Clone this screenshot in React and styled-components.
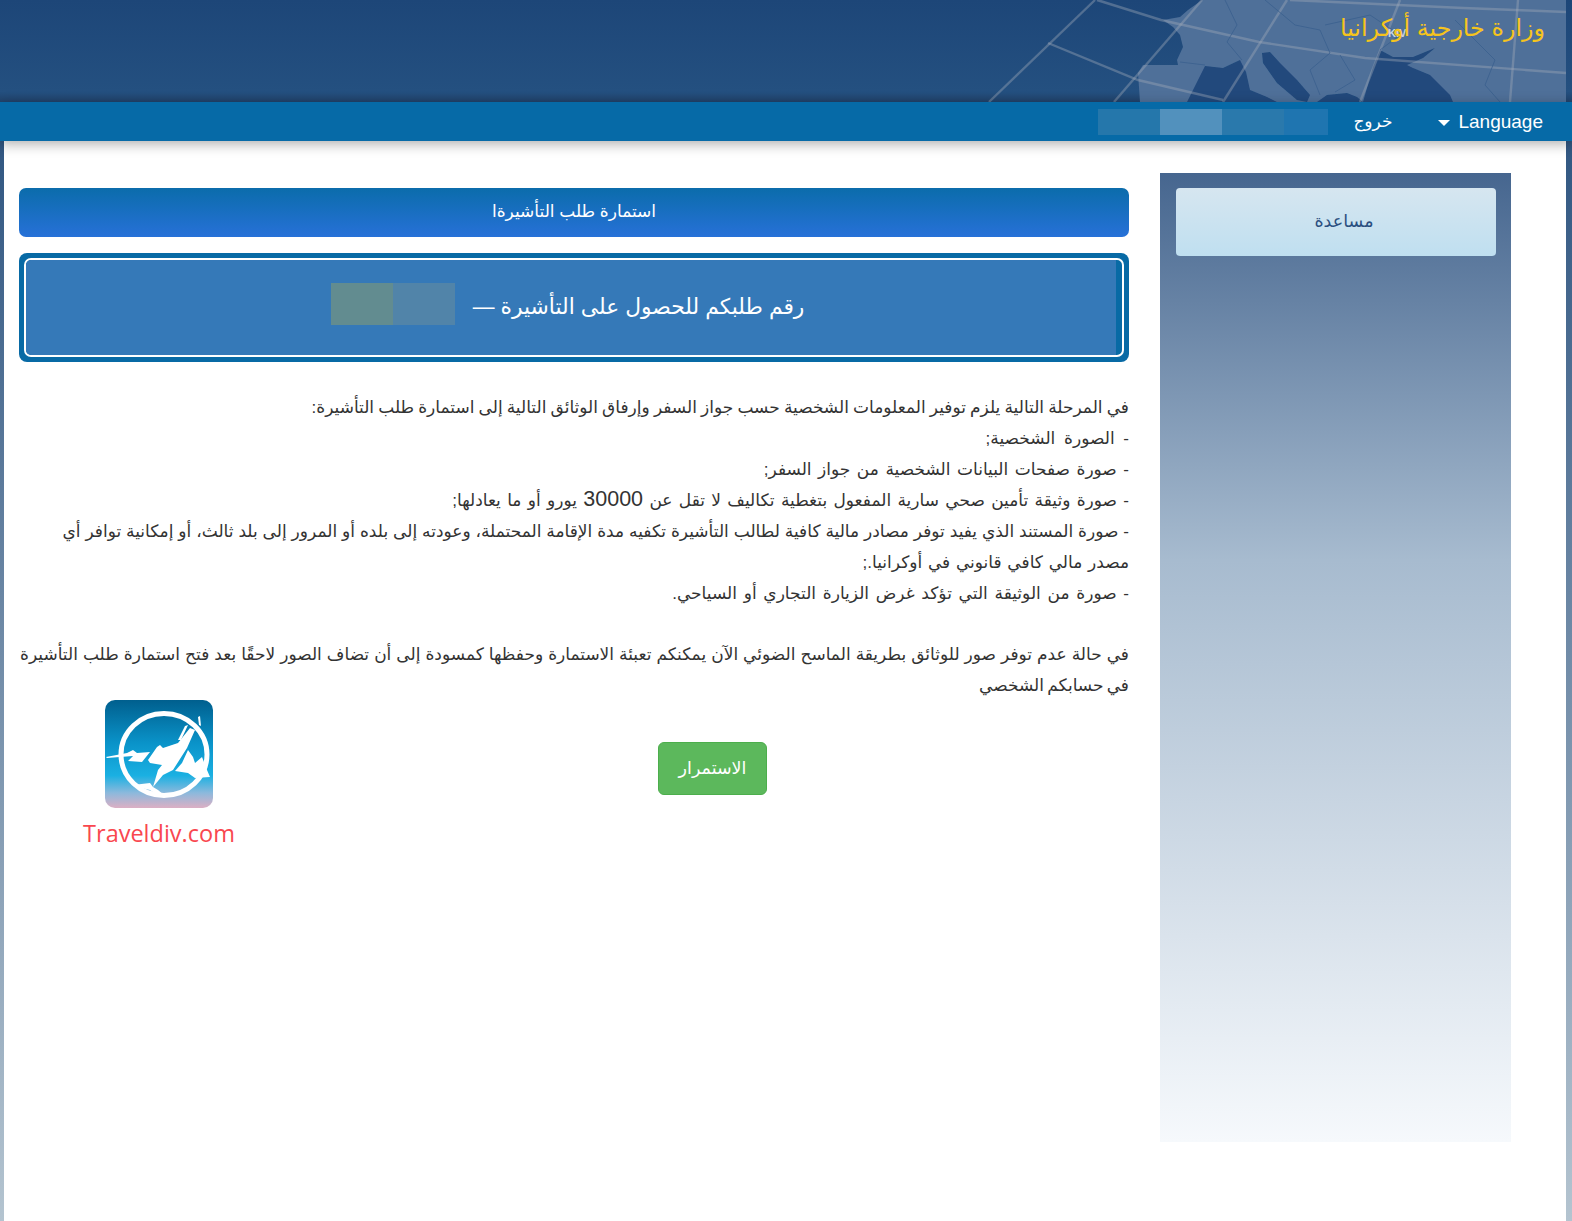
import React from "react";
import styled, { createGlobalStyle } from "styled-components";

const GlobalStyle = createGlobalStyle`
    html, body {
        margin: 0;
        padding: 0;
        background: #fff;
    }
    body {
        font-family: "Liberation Sans", "DejaVu Sans", Arial, sans-serif;
        color: #333;
    }
`;

const Page = styled.div`
    width: 1572px;
    min-height: 1221px;
    display: flex;
    flex-direction: column;
    background: linear-gradient(#1f4877 0%, #5d7b9c 40%, #b4c4d0 100%);
`;

const Header = styled.header`
    position: relative;
    height: 102px;
    overflow: hidden;
    display: flex;
    justify-content: flex-end;
    background: linear-gradient(#1d4678 0%, #245080 90%, #21436c 100%);
`;

const MapArt = styled.svg`
    position: absolute;
    top: 0;
    right: 0;
    width: 592px;
    height: 102px;
`;

const MinistryName = styled.h1`
    position: relative;
    margin: 13px 27px 0 0;
    font-size: 23.8px;
    line-height: 29px;
    font-weight: normal;
    color: #f6c41c;
    direction: rtl;
`;

const NavBar = styled.nav`
    position: relative;
    z-index: 2;
    height: 39px;
    display: flex;
    justify-content: flex-end;
    align-items: center;
    padding-right: 29px;
    background: #066aa7;
    box-shadow: 0 3px 12px rgba(0, 0, 0, 0.32);
    color: #fff;
`;

const NavBlur = styled.div`
    display: flex;
    width: 230px;
    height: 26px;
    margin-top: 1px;
    margin-right: 25px;
`;

const Pixel = styled.span`
    width: ${(p) => p.$w}px;
    background: ${(p) => p.$c};
`;

const NavLink = styled.a`
    font-size: 17px;
    margin-right: 46px;
    direction: rtl;
`;

const LanguageMenu = styled.a`
    display: flex;
    align-items: center;
    gap: 8px;
    font-size: 19px;
`;

const Caret = styled.span`
    width: 0;
    height: 0;
    margin-top: 3px;
    border-left: 6px solid transparent;
    border-right: 6px solid transparent;
    border-top: 6px solid #fff;
`;

const Body = styled.div`
    flex: 1;
    display: flex;
    align-items: flex-start;
    gap: 31px;
    margin: 0 6px 0 4px;
    padding: 0 55px 0 15px;
    background: #fff;
`;

const Main = styled.main`
    width: 1110px;
    padding-top: 47px;
`;

const TitleBar = styled.div`
    height: 49px;
    box-sizing: border-box;
    padding-bottom: 2px;
    display: flex;
    justify-content: center;
    align-items: center;
    border-radius: 7px;
    background: linear-gradient(#0b6cab, #2771d8);
    color: #fff;
    font-size: 17px;
    direction: rtl;
`;

const NumberFrame = styled.div`
    margin-top: 16px;
    height: 109px;
    box-sizing: border-box;
    padding: 5px;
    border-radius: 8px;
    background: #086aa5;
`;

const NumberInner = styled.div`
    height: 100%;
    box-sizing: border-box;
    border: 2px solid #fff;
    border-radius: 7px;
    overflow: hidden;
`;

const NumberPanel = styled.div`
    height: 100%;
    box-sizing: border-box;
    display: flex;
    justify-content: center;
    align-items: center;
    gap: 18px;
    direction: rtl;
    margin-right: 6px;
    padding: 0 7px 2px 0;
    background: #3579b8;
    color: #fff;
    font-size: 21.8px;
`;

const NumberBlur = styled.div`
    display: flex;
    width: 124px;
    height: 42px;
    margin-top: -6px;
`;

const Copy = styled.div`
    margin-top: 30px;
    direction: rtl;
    font-size: 17px;
`;

const Line = styled.div`
    height: 31px;
    line-height: 31px;
    white-space: nowrap;
    word-spacing: ${(p) => p.$spread || 0}px;
    text-align: right;
`;

const Gap = styled.div`
    height: 30px;
`;

const Amount = styled.span`
    font-size: 21.5px;
    line-height: 0;
`;

const ActionRow = styled.div`
    display: flex;
    align-items: flex-start;
    margin-top: -1px;
    padding-left: 65px;
    gap: 424px;
`;

const Brand = styled.div`
    width: 150px;
    display: flex;
    flex-direction: column;
    align-items: center;
`;

const LogoArt = styled.svg`
    width: 108px;
    height: 108px;
`;

const BrandName = styled.div`
    margin-top: 9px;
    font-family: "Open Sans", sans-serif;
    font-size: 23.5px;
    line-height: 32px;
    color: #f9474f;
`;

const ContinueButton = styled.button`
    width: 109px;
    height: 53px;
    margin-top: 42px;
    border: 1px solid #4cae4c;
    border-radius: 6px;
    background: #5cb85c;
    color: #fff;
    font: inherit;
    font-size: 17.5px;
    direction: rtl;
`;

const Sidebar = styled.aside`
    width: 351px;
    height: 969px;
    margin-top: 32px;
    box-sizing: border-box;
    padding: 15px 15px 0 16px;
    background: linear-gradient(#46668f 0%, #a7bbcf 40%, #f6f9fc 100%);
`;

const HelpCard = styled.a`
    height: 68px;
    box-sizing: border-box;
    padding: 0 0 2px 16px;
    display: flex;
    justify-content: center;
    align-items: center;
    border-radius: 4px;
    background: linear-gradient(#d6e6f0, #bfdff0);
    color: #2b4f80;
    font-size: 17.5px;
    direction: rtl;
`;

const navPixels = [
    [62, "#2577ab"],
    [62, "#5291bd"],
    [62, "#2a79ac"],
    [44, "#1f75b0"],
];

const numberPixels = [
    [62, "#5184a9"],
    [62, "#628c90"],
];

const Map = () => (
    <MapArt viewBox="-150 0 592 102">
        <defs>
            <filter id="soft">
                <feGaussianBlur stdDeviation="0.6" />
            </filter>
        </defs>
        <path
            fill="#4f7099"
            d="M72 0 L58 10 L50 17 L33 20 L43 27 L50 35 L53 47 L47 60 L48 65 L13 65 L8 73 L10 102 L436 102 L436 0 Z"
        />
        <g fill="#20497c" filter="url(#soft)">
            <path d="M57 102 L68 80 L75 66 L93 68 L110 60 L116 72 L120 90 L137 97 L147 102 Z" />
            <path d="M132 53 L140 52 L150 63 L167 80 L180 95 L177 102 L167 100 L147 83 L133 63 Z" />
            <path d="M187 102 L197 95 L217 93 L227 97 L233 102 Z" />
            <path d="M250 50 L263 57 L283 57 L305 48 L293 58 L277 65 L283 68 L300 75 L320 95 L323 102 L233 102 L243 67 Z" />
        </g>
        <g fill="none" stroke="#a0aab8" strokeOpacity="0.4" strokeWidth="2.4" filter="url(#soft)">
            <path d="M-33 0 L31 20 L129 42 L235 58 L436 73" />
            <path d="M160 0 L333 8 L436 12" />
            <path d="M-35 0 L-141 102" />
            <path d="M72 0 L-16 102" />
            <path d="M157 0 L93 102" />
            <path d="M270 0 L230 102" />
            <path d="M388 0 L380 102" />
            <path d="M-82 43 L8 80 L93 100" />
        </g>
        <g fill="none" stroke="#3a5f8e" strokeWidth="0.8">
            <path d="M95 0 L107 25 L97 42 L112 60" />
            <path d="M135 0 L165 25 L190 30 L200 53 L180 70 L190 95" />
            <path d="M195 25 L240 15 L270 35 L250 50" />
            <path d="M325 20 L345 40 L365 60 L355 85 L370 102" />
            <path d="M50 62 L75 65" />
            <path d="M210 55 L225 80 L205 92" />
        </g>
        <text x="258" y="37" fontSize="11" fontWeight="bold" fill="#c9d4e2" fontFamily="Liberation Sans, sans-serif">
            KIV
        </text>
    </MapArt>
);

const Logo = () => (
    <LogoArt viewBox="0 0 108 108">
        <defs>
            <linearGradient id="logoSky" x1="0" y1="0" x2="0" y2="1">
                <stop offset="0" stopColor="#005f8e" />
                <stop offset="0.4" stopColor="#0a93c9" />
                <stop offset="0.7" stopColor="#1ab0e2" />
                <stop offset="0.86" stopColor="#8cb9dc" />
                <stop offset="1" stopColor="#dcafc4" />
            </linearGradient>
        </defs>
        <rect width="108" height="108" rx="10" fill="url(#logoSky)" />
        <ellipse cx="59" cy="54.5" rx="43" ry="41" fill="none" stroke="#fff" strokeWidth="5" />
        <g fill="#fff">
            <path d="M1 57 L22 53 L28 50 L32 53 L45 52 L37 62 L23 61 L28 56 L2 58 Z" />
            <path d="M43 60 L52 47 L55 45 L58 48 L73 43 L85 28 L90 30 L82 48 L68 70 L58 75 L48 87 L53 70 L57 65 L45 63 Z" />
            <path d="M70 71 L77 63 L83 50 L88 57 L90 63 L97 57 L102 70 L105 77 L90 78 L83 73 Z" />
            <path d="M28 85 L45 83 L48 87 L53 90 L59 95 L52 95 L45 90 L28 86 Z" />
            <path d="M73 40 L80 26 L83 25 L76 40 Z" />
            <path d="M93 17 L95 16 L96 26 L94 25 Z" />
        </g>
    </LogoArt>
);

export default function App() {
    return (
        <>
            <GlobalStyle />
            <Page>
                <Header>
                    <Map />
                    <MinistryName>وزارة خارجية أوكرانيا</MinistryName>
                </Header>
                <NavBar>
                    <NavBlur>
                        {navPixels.map(([w, c]) => (
                            <Pixel key={c} $w={w} $c={c} />
                        ))}
                    </NavBlur>
                    <NavLink>خروج</NavLink>
                    <LanguageMenu>
                        <Caret />
                        Language
                    </LanguageMenu>
                </NavBar>
                <Body>
                    <Main>
                        <TitleBar>استمارة طلب التأشيرةا</TitleBar>
                        <NumberFrame>
                            <NumberInner>
                                <NumberPanel>
                                    <span>رقم طلبكم للحصول على التأشيرة —</span>
                                    <NumberBlur>
                                        {numberPixels.map(([w, c]) => (
                                            <Pixel key={c} $w={w} $c={c} />
                                        ))}
                                    </NumberBlur>
                                </NumberPanel>
                            </NumberInner>
                        </NumberFrame>
                        <Copy>
                            <Line $spread={-0.6}>في المرحلة التالية يلزم توفير المعلومات الشخصية حسب جواز السفر وإرفاق الوثائق التالية إلى استمارة طلب التأشيرة:</Line>
                            <Line $spread={4}>- الصورة الشخصية;</Line>
                            <Line $spread={1.8}>- صورة صفحات البيانات الشخصية من جواز السفر;</Line>
                            <Line $spread={1.6}>
                                - صورة وثيقة تأمين صحي سارية المفعول بتغطية تكاليف لا تقل عن <Amount>30000</Amount> يورو أو ما يعادلها;
                            </Line>
                            <Line $spread={0.2}>- صورة المستند الذي يفيد توفر مصادر مالية كافية لطالب التأشيرة تكفيه مدة الإقامة المحتملة، وعودته إلى بلده أو المرور إلى بلد ثالث، أو إمكانية توافر أي</Line>
                            <Line $spread={1}>مصدر مالي كافي قانوني في أوكرانيا.;</Line>
                            <Line $spread={2}>- صورة من الوثيقة التي تؤكد غرض الزيارة التجاري أو السياحي.</Line>
                            <Gap />
                            <Line $spread={0.3}>في حالة عدم توفر صور للوثائق بطريقة الماسح الضوئي الآن يمكنكم تعبئة الاستمارة وحفظها كمسودة إلى أن تضاف الصور لاحقًا بعد فتح استمارة طلب التأشيرة</Line>
                            <Line $spread={-1.5}>في حسابكم الشخصي</Line>
                        </Copy>
                        <ActionRow>
                            <Brand>
                                <Logo />
                                <BrandName>Traveldiv.com</BrandName>
                            </Brand>
                            <ContinueButton>الاستمرار</ContinueButton>
                        </ActionRow>
                    </Main>
                    <Sidebar>
                        <HelpCard>مساعدة</HelpCard>
                    </Sidebar>
                </Body>
            </Page>
        </>
    );
}
